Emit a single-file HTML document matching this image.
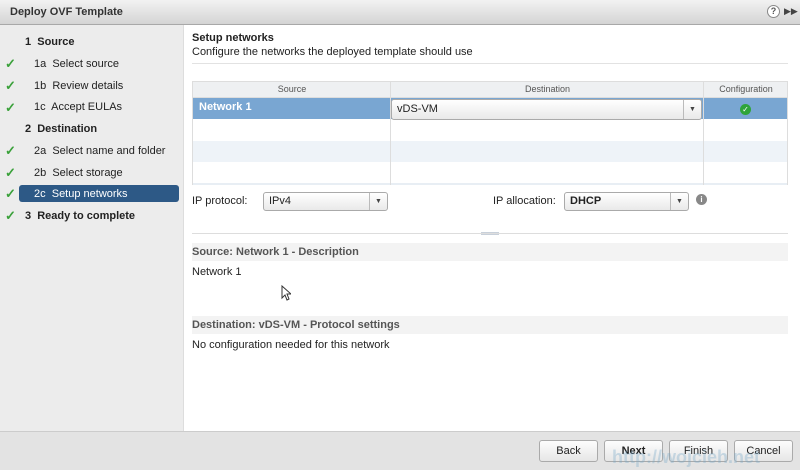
<!DOCTYPE html>
<html><head><style>
*{margin:0;padding:0;box-sizing:border-box}
body{width:800px;height:470px;overflow:hidden;font-family:"Liberation Sans",sans-serif;font-size:11px;color:#222;background:#fff;position:relative}
.a{position:absolute}
.title{left:0;top:0;width:800px;height:25px;background:linear-gradient(#f2f2f2,#d4d4d4);border-bottom:1px solid #a8a8a8}
.side{left:0;top:25px;width:184px;height:406px;background:#ececec;border-right:1px solid #ddd}
.chk{color:#3aa13a;font-size:13px;font-weight:bold}
.foot{left:0;top:431px;width:800px;height:39px;background:#e3e3e3;border-top:1px solid #ccc}
.btn{top:440px;height:22px;border:1px solid #aaa;border-radius:3px;background:linear-gradient(#fdfdfd,#e6e6e6);text-align:center;line-height:20px;font-size:11px}
.sel{height:19px;border:1px solid #aaa;border-radius:3px;background:linear-gradient(#fff,#e9e9e9);line-height:17px;padding-left:5px;font-size:11px}
.arr{position:absolute;right:0;top:0;width:18px;height:17px;border-left:1px solid #bbb;text-align:center;font-size:7px;line-height:17px;color:#444}
.band{left:192px;width:596px;height:18px;background:#f3f3f3;font-weight:bold;color:#555;line-height:18px}
</style></head><body>
<div class="a title"><span class="a" style="left:10px;top:6px;font-weight:bold;color:#333">Deploy OVF Template</span>
<div class="a" style="left:767px;top:5px;width:13px;height:13px;border-radius:50%;border:1px solid #888;background:#fff;font-size:9px;text-align:center;line-height:11px;font-weight:bold;color:#555">?</div>
<span class="a" style="left:784px;top:6px;font-size:9px;color:#444">▶▶</span></div>
<div class="a side"></div>
<div class="a" style="left:25px;top:36px;font-weight:bold">1&nbsp; Source</div>
<span class="a chk" style="left:5px;top:56px">✓</span><div class="a" style="left:34px;top:58px">1a&nbsp; Select source</div>
<span class="a chk" style="left:5px;top:78px">✓</span><div class="a" style="left:34px;top:80px">1b&nbsp; Review details</div>
<span class="a chk" style="left:5px;top:100px">✓</span><div class="a" style="left:34px;top:101px">1c&nbsp; Accept EULAs</div>
<div class="a" style="left:25px;top:123px;font-weight:bold">2&nbsp; Destination</div>
<span class="a chk" style="left:5px;top:143px">✓</span><div class="a" style="left:34px;top:145px">2a&nbsp; Select name and folder</div>
<span class="a chk" style="left:5px;top:165px">✓</span><div class="a" style="left:34px;top:167px">2b&nbsp; Select storage</div>
<div class="a" style="left:19px;top:185px;width:160px;height:17px;background:#2d5986;border-radius:3px"></div>
<span class="a chk" style="left:5px;top:186px">✓</span><div class="a" style="left:34px;top:188px;color:#fff">2c&nbsp; Setup networks</div>
<span class="a chk" style="left:5px;top:208px">✓</span><div class="a" style="left:25px;top:210px;font-weight:bold">3&nbsp; Ready to complete</div>

<div class="a" style="left:192px;top:32px;font-weight:bold">Setup networks</div>
<div class="a" style="left:192px;top:46px">Configure the networks the deployed template should use</div>
<div class="a" style="left:192px;top:63px;width:596px;height:1px;background:#e2e2e2"></div>

<div class="a" style="left:192px;top:81px;width:596px;height:104px;border:1px solid #ddd;border-bottom:none">
<div class="a" style="left:0;top:0;width:594px;height:16px;background:#eef0f2;border-bottom:1px solid #ddd;font-size:9px;color:#555;line-height:15px">
<span class="a" style="left:0;width:198px;text-align:center">Source</span><span class="a" style="left:198px;width:313px;text-align:center">Destination</span><span class="a" style="left:511px;width:84px;text-align:center">Configuration</span></div>
<div class="a" style="left:0;top:16px;width:594px;height:21px;background:#79a6d2"></div>
<div class="a" style="left:0;top:59px;width:594px;height:21px;background:#eef3f8"></div>
<div class="a" style="left:0;top:101px;width:594px;height:2px;background:#e8eef4"></div>
<div class="a" style="left:197px;top:0;width:1px;height:103px;background:#ddd"></div>
<div class="a" style="left:510px;top:0;width:1px;height:103px;background:#ddd"></div>
<div class="a" style="left:6px;top:19px;color:#fff;font-weight:bold">Network 1</div>
<div class="a sel" style="left:198px;top:17px;width:311px;height:21px;line-height:19px">vDS-VM<div class="arr" style="height:19px;line-height:19px">▼</div></div>
<div class="a" style="left:547px;top:22px;width:11px;height:11px;border-radius:50%;background:#2fa43a;color:#fff;font-size:8px;text-align:center;line-height:11px">✓</div>
</div>

<div class="a" style="left:192px;top:195px">IP protocol:</div>
<div class="a sel" style="left:263px;top:192px;width:125px">IPv4<div class="arr">▼</div></div>
<div class="a" style="left:493px;top:195px">IP allocation:</div>
<div class="a sel" style="left:564px;top:192px;width:125px;font-weight:bold">DHCP<div class="arr">▼</div></div>
<div class="a" style="left:696px;top:194px;width:11px;height:11px;border-radius:50%;background:#888;color:#fff;font-size:8px;text-align:center;line-height:11px;font-weight:bold">i</div>

<div class="a" style="left:192px;top:233px;width:596px;height:1px;background:#ddd"></div>
<div class="a" style="left:481px;top:232px;width:18px;height:3px;border-top:1px solid #c8d0da;border-bottom:1px solid #c8d0da"></div>
<div class="a band" style="top:243px">Source: Network 1 - Description</div>
<div class="a" style="left:192px;top:266px">Network 1</div>
<svg class="a" style="left:281px;top:285px" width="10" height="16" viewBox="0 0 10 16"><path d="M1 1 L1 13 L4 10 L6 15 L8 14 L6 9 L10 9 Z" fill="#fff" stroke="#333" stroke-width="1"/></svg>
<div class="a band" style="top:316px">Destination: vDS-VM - Protocol settings</div>
<div class="a" style="left:192px;top:339px">No configuration needed for this network</div>

<div class="a foot"></div>
<div class="a btn" style="left:539px;width:59px">Back</div>
<div class="a btn" style="left:604px;width:59px;font-weight:bold">Next</div>
<div class="a btn" style="left:669px;width:59px">Finish</div>
<div class="a btn" style="left:734px;width:59px">Cancel</div>
<div class="a" style="left:612px;top:447px;font-size:18px;font-weight:bold;color:rgba(120,170,200,0.35)">http://wojcieh.net</div>
</body></html>
